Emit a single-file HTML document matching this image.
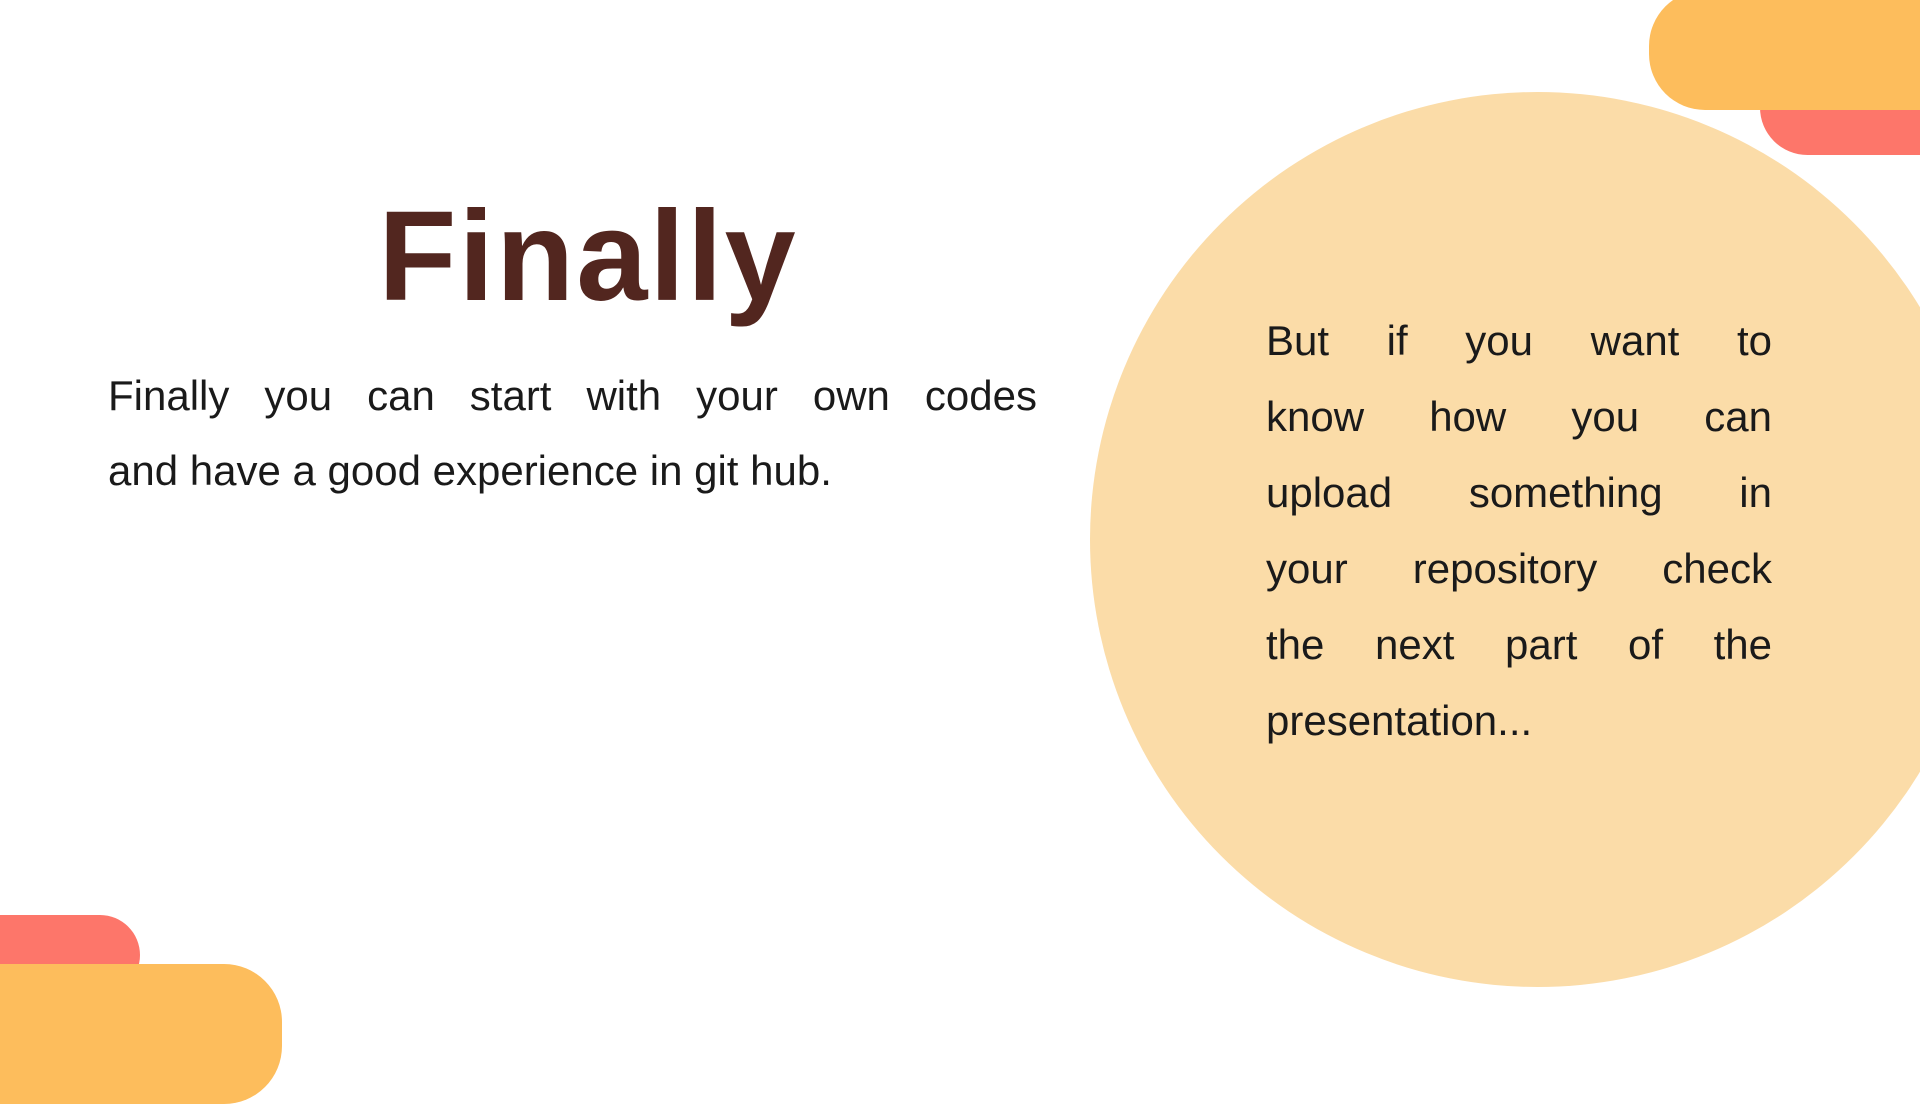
<!DOCTYPE html>
<html><head><meta charset="utf-8"><style>
html,body{margin:0;padding:0}
body{width:1920px;height:1080px;position:relative;overflow:hidden;background:#fff;font-family:"Liberation Sans",sans-serif}
.a{position:absolute}
.t{position:absolute;color:#1a1a1a;font-size:42px;text-align:justify;text-align-last:justify;line-height:75px;}
.r{position:absolute;left:1266px;width:506px;color:#1a1a1a;font-size:42px;text-align:justify;text-align-last:justify;line-height:76px}
</style></head><body>
<div class="a" style="left:1090px;top:92px;width:895px;height:895px;border-radius:50%;background:#fbdca8"></div>
<div class="a" style="left:1760px;top:60px;width:260px;height:95px;border-radius:48px;background:#fd766a"></div>
<div class="a" style="left:1649px;top:-10px;width:400px;height:120px;border-radius:56px;background:#fdbd5c"></div>
<div class="a" style="left:-60px;top:915px;width:200px;height:80px;border-radius:40px;background:#fd766a"></div>
<div class="a" style="left:-80px;top:964px;width:362px;height:140px;border-radius:58px;background:#fdbd5c"></div>
<div class="a" style="left:288px;top:182px;width:600px;text-align:center;font-size:128px;font-weight:bold;color:#52261f;line-height:150px;letter-spacing:2px">Finally</div>
<div class="t" style="left:108px;top:358px;width:929px">Finally you can start with your own codes</div>
<div class="t" style="left:108px;top:433px;width:929px;text-align-last:left">and have a good experience in git hub.</div>
<div class="r" style="top:303px">But if you want to</div>
<div class="r" style="top:379px">know how you can</div>
<div class="r" style="top:455px">upload something in</div>
<div class="r" style="top:531px">your repository check</div>
<div class="r" style="top:607px">the next part of the</div>
<div class="r" style="top:683px;text-align-last:left">presentation...</div>
</body></html>
